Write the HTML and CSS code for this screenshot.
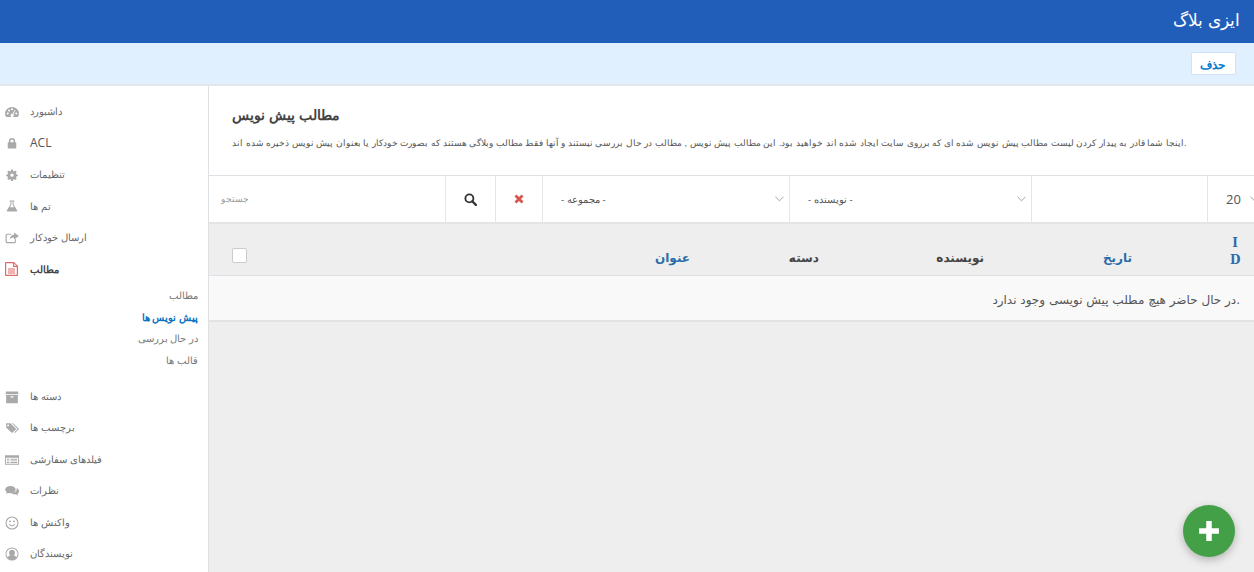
FILE: index.html
```html
<!DOCTYPE html>
<html lang="fa">
<head>
<meta charset="utf-8">
<title>ایزی بلاگ</title>
<link rel="stylesheet" href="styles.css">
</head>
<body>
<header class="topbar"><span class="brand" dir="rtl">ایزی بلاگ</span></header>
<div class="toolbar"><button class="btn-delete" type="button">حذف</button></div>
<div class="layout">
  <nav class="sidebar">
    <a class="nav-item"><svg class="ico" viewBox="0 0 18 14"><path d="M9 0.5C4 0.5 0 4.3 0 9c0 1.7.5 3.200 1.400 4.500h15.200C17.500 12.200 18 10.700 18 9 18 4.300 14 .5 9 .5z"/><g fill="#fff"><circle cx="3.500" cy="9" r="1.300"/><circle cx="5.200" cy="5" r="1.300"/><circle cx="9" cy="3.400" r="1.300"/><circle cx="14.500" cy="9" r="1.300"/><path d="M12.600 4.300l1 .6-2.900 5.100a2 2 0 1 1-1-.6z"/></g></svg><span>داشبورد</span></a>
    <a class="nav-item"><svg class="ico" viewBox="0 0 18 14"><path d="M5 6V4.500a4 4 0 0 1 8 0V6h.5a1 1 0 0 1 1 1v6a1 1 0 0 1-1 1h-9a1 1 0 0 1-1-1V7a1 1 0 0 1 1-1zm2 0h4V4.500a2 2 0 0 0-4 0z"/></svg><span class="latin">ACL</span></a>
    <a class="nav-item"><svg class="ico" viewBox="0 0 18 14"><path fill-rule="evenodd" d="M7.800 0h2.400l.3 1.900 1.300.5 1.600-1.100 1.700 1.700-1.100 1.600.5 1.300 1.900.3v2.400l-1.900.3-.5 1.300 1.100 1.600-1.700 1.700-1.600-1.100-1.300.5-.3 1.900H7.800l-.3-1.900-1.300-.5-1.600 1.100-1.700-1.700L4 10.200l-.5-1.300-1.900-.3V6.200l1.900-.3.500-1.300L2.900 3l1.700-1.700 1.600 1.100 1.300-.5zM9 5a2.200 2.200 0 1 0 0 4.400A2.200 2.200 0 0 0 9 5z"/></svg><span>تنظیمات</span></a>
    <a class="nav-item"><svg class="ico" viewBox="0 0 18 14"><path d="M6 0h6v1.200h-1V5l4.500 7.400c.5.800 0 1.600-.9 1.600H3.400c-.9 0-1.400-.8-.9-1.600L7 5V1.200H6zm2.200 1.200v4.100L6.300 8.500h5.400L9.800 5.300V1.200z"/></svg><span>تم ها</span></a>
    <a class="nav-item"><svg class="ico" viewBox="0 0 18 14"><path d="M11.500 0L18 4.500 11.500 9V6.300C8.500 6.300 6.800 7.200 6 9.500 6 5.500 8 3 11.500 2.700z"/><path d="M3 1.500h5v1.300H3.200c-.6 0-1 .4-1 1v7.400c0 .6.400 1 1 1h8.600c.6 0 1-.4 1-1V9l1.300-1v3.500c0 1.400-1 2.300-2.300 2.300H3c-1.400 0-2.300-1-2.300-2.300V3.800C.7 2.500 1.600 1.500 3 1.500z"/></svg><span>ارسال خودکار</span></a>
    <a class="nav-item nav-item-active"><svg class="ico ico-red" viewBox="0 0 14 14"><path d="M1 0h8l4 4v9a1 1 0 0 1-1 1H1a1 1 0 0 1-1-1V1a1 1 0 0 1 1-1z M1.200 1.200v11.600h10.600V5H8V1.200zM9.200 1.600V3.800h2.200zM3 6.500h7v1H3zM3 8.500h7v1H3zM3 10.500h7v1H3z" fill-rule="evenodd"/></svg><span>مطالب</span></a>
    <ul class="subnav">
      <li>مطالب</li>
      <li class="subnav-active">پیش نویس ها</li>
      <li>در حال بررسی</li>
      <li>قالب ها</li>
    </ul>
    <a class="nav-item"><svg class="ico" viewBox="0 0 18 14"><path fill-rule="evenodd" d="M1 0h16v3.500H1zM1.500 4.300h15V15h-15zM7 6v1.500h4V6z"/></svg><span>دسته ها</span></a>
    <a class="nav-item"><svg class="ico" viewBox="0 0 18 14"><path fill-rule="evenodd" d="M1.500 1H7l7.500 7.300L9 13.500 1.500 6.200zM4 2.500a1.200 1.200 0 1 0 0 2.400 1.200 1.200 0 0 0 0-2.400z"/><path d="M9 1h1.500L18 8.300l-5.200 5.200-1-1 4.300-4.200z"/></svg><span>برچسب ها</span></a>
    <a class="nav-item"><svg class="ico" viewBox="0 0 18 14"><path fill-rule="evenodd" d="M0 1h18v12H0zM1.200 4v7.800h15.600V4zM2.500 5.500h3v1.200h-3zM7 5.500h8.500v1.200H7zM2.500 7.500h3v1.200h-3zM7 7.500h8.500v1.200H7zM2.500 9.500h3v1.200h-3zM7 9.500h8.500v1.200H7z"/></svg><span>فیلدهای سفارشی</span></a>
    <a class="nav-item"><svg class="ico" viewBox="0 0 18 14"><ellipse cx="7" cy="5.200" rx="6.700" ry="4.700"/><path d="M2.500 8l-1.200 3 3.500-2z"/><path d="M14.500 3.300C16.700 4 18 5.500 18 7.300c0 1.400-.8 2.500-2 3.300l.8 2.400-3-1.700c-2.300.3-4.600-.4-5.800-1.800 3.800.2 7.200-2 7.200-5 0-.4-.1-.7-.7-1.400z"/></svg><span>نظرات</span></a>
    <a class="nav-item"><svg class="ico" viewBox="0 0 16 16"><path fill-rule="evenodd" d="M8 .5a7.500 7.500 0 1 1 0 15 7.500 7.500 0 0 1 0-15zm0 1.300a6.200 6.200 0 1 0 0 12.400A6.200 6.200 0 0 0 8 1.800zM5.700 5a1 1 0 1 1 0 2.200 1 1 0 0 1 0-2.200zm4.600 0a1 1 0 1 1 0 2.200 1 1 0 0 1 0-2.200zM4.400 9.400l1.100-.4c.5 1 1.400 1.500 2.500 1.500s2-.5 2.500-1.500l1.100.4c-.6 1.500-2 2.300-3.600 2.300s-3-.8-3.600-2.300z"/></svg><span>واکنش ها</span></a>
    <a class="nav-item"><svg class="ico" viewBox="0 0 16 16"><path fill-rule="evenodd" d="M8 .5a7.500 7.500 0 1 1 0 15 7.500 7.500 0 0 1 0-15zm0 1.200a6.300 6.300 0 0 0-4.900 10.200c.6-1.400 1.900-2.200 3-2.500a3.400 3.400 0 1 1 3.800 0c1.100.3 2.400 1.100 3 2.500A6.300 6.300 0 0 0 8 1.700z"/></svg><span>نویسندگان</span></a>
  </nav>
  <main class="main">
    <section class="intro">
      <h1 class="intro-title">مطالب پیش نویس</h1>
      <p class="intro-text">اینجا شما قادر به پیدار کردن لیست مطالب پیش نویس شده ای که برروی سایت ایجاد شده اند خواهید بود. این مطالب پیش نویس , مطالب در حال بررسی نیستند و آنها فقط مطالب وبلاگی هستند که بصورت خودکار یا بعنوان پیش نویس ذخیره شده اند.</p>
    </section>
    <div class="filters">
      <div class="f-cell f-search"><span class="placeholder">جستجو</span></div>
      <div class="f-cell f-btn"><svg class="search-ico" viewBox="0 0 14 14"><circle cx="5.800" cy="5.800" r="4.300" fill="none" stroke="#333" stroke-width="2"/><path d="M8.800 8.800l4 4" stroke="#333" stroke-width="2.400" stroke-linecap="round"/></svg></div>
      <div class="f-cell f-clear"><svg class="x-ico" viewBox="0 0 10 10"><path d="M1.500 1.500l7 7M8.500 1.500l-7 7" stroke="#d9534f" stroke-width="2.800"/></svg></div>
      <div class="f-cell f-select f-group"><svg class="chev" viewBox="0 0 10 6"><path d="M.5.5L5 5 9.500.5" fill="none" stroke="#999"/></svg><span>- مجموعه -</span></div>
      <div class="f-cell f-select f-author"><svg class="chev" viewBox="0 0 10 6"><path d="M.5.500L5 5 9.500.5" fill="none" stroke="#999"/></svg><span>- نویسنده -</span></div>
      <div class="f-cell f-empty"></div>
      <div class="f-cell f-limit"><span class="latin-num">20</span><svg class="chev" viewBox="0 0 10 6"><path d="M.5.500L5 5 9.500.5" fill="none" stroke="#999"/></svg></div>
    </div>
    <div class="thead">
      <span class="check"></span>
      <span class="th th-link">عنوان</span>
      <span class="th">دسته</span>
      <span class="th">نویسنده</span>
      <span class="th th-link">تاریخ</span>
      <span class="th th-link th-id"><span class="id-text">ID</span></span>
    </div>
    <div class="empty-row">در حال حاضر هیچ مطلب پیش نویسی وجود ندارد.</div>
  </main>
</div>
<button class="fab" type="button"><svg viewBox="0 0 20 20"><path d="M7.500 1h5v6.500H19v5h-6.500V19h-5v-6.500H1v-5h6.500z" fill="#fff"/></svg></button>
</body>
</html>
```
FILE: styles.css
```css
* { box-sizing: border-box; }
html, body { margin: 0; height: 100%; }
body {
  height: 572px;
  overflow: hidden;
  background: #eee;
  font-family: "Liberation Sans", sans-serif;
  color: #444;
  display: flex;
  flex-direction: column;
}
.topbar {
  height: 43px;
  flex: none;
  background: #215eba;
  display: flex;
  align-items: center;
  justify-content: flex-end;
  padding: 0 14px 3px 0;
}
.brand { color: #fff; font-size: 16.5px; }
.toolbar {
  height: 43px;
  flex: none;
  background: #e1f0ff;
  border-bottom: 2px solid #e4e7ea;
  display: flex;
  align-items: center;
  justify-content: flex-end;
  padding-right: 18px;
}
.btn-delete {
  width: 45px;
  height: 23px;
  padding: 2px 2px 0 0;
  background: #fff;
  border: 1px solid #cfe2f7;
  border-radius: 2px;
  color: #0b7ad1;
  font: bold 12px "Liberation Sans", sans-serif;
}
.layout { flex: 1; display: flex; min-height: 0; }
.sidebar {
  width: 209px;
  flex: none;
  background: #fff;
  border-right: 1px solid #dde0e4;
  padding: 10px 0 0 0;
}
.nav-item {
  display: flex;
  align-items: center;
  height: 31.5px;
  padding-left: 5px;
  font-size: 9.5px;
  color: #666;
  gap: 11px;
}
.nav-item span { line-height: 1; }
.nav-item .latin { font-size: 12px; font-family: "Open Sans", sans-serif; color: #555; }
.ico { width: 14px; height: 14px; flex: none; fill: #a9a9a9; overflow: visible; }
.ico-red { fill: #df6a67; }
.nav-item-active { font-weight: bold; color: #444; }
.subnav {
  list-style: none;
  margin: 0 0 9px;
  padding: 0 10px 0 0;
  text-align: right;
  font-size: 9.5px;
  color: #777;
}
.subnav li { height: 21.7px; line-height: 21.7px; }
.subnav-active { color: #0b6fc2; font-weight: bold; }
.main { flex: 1; min-width: 0; }
.intro {
  height: 89px;
  background: #fff;
  padding: 18px 23px 0;
}
.intro-title {
  margin: 0;
  font-size: 14px;
  line-height: 22px;
  font-weight: bold;
  color: #444;
}
.intro-text {
  margin: 9px 0 0;
  font-size: 9.2px;
  line-height: 16px;
  white-space: nowrap;
  color: #555;
}
.filters {
  height: 49px;
  background: #fff;
  border-top: 1px solid #dde0e4;
  border-bottom: 2px solid #e4e4e4;
  display: flex;
}
.f-cell { flex: none; display: flex; align-items: center; border-right: 1px solid #e4e6ea; font-size: 9.5px; color: #555; }
.f-search { width: 237px; padding-left: 12px; }
.placeholder { color: #999; font-size: 9px; }
.f-btn { width: 50px; justify-content: center; }
.f-clear { width: 47px; justify-content: center; }
.f-select { justify-content: space-between; flex-direction: row-reverse; padding: 0 5px 0 18px; }
.f-group { width: 247px; }
.f-author { width: 242px; }
.f-empty { width: 176px; }
.f-limit { width: 46px; border-right: 0; padding-left: 18px; gap: 9px; overflow: hidden; }
.latin-num { font-size: 13px; font-family: "Open Sans", sans-serif; color: #555; }
.chev { width: 9px; height: 6px; flex: none; }
.search-ico { width: 13px; height: 13px; }
.x-ico { width: 10px; height: 10px; }
.thead {
  height: 52px;
  border-bottom: 1px solid #dde0e4;
  display: grid;
  grid-template-columns: 14px 444px 129px 165px 148px 108px;
  padding-left: 23px;
  align-items: end;
  padding-bottom: 9px;
}
.check {
  width: 15px;
  height: 15px;
  background: #fff;
  border: 1px solid #ccc;
  border-radius: 2px;
  margin-bottom: 3px;
}
.th {
  text-align: right;
  font: bold 12px/16px "DejaVu Sans", sans-serif;
  color: #444;
}
.th-link { color: #2a6ca8; }
.th-id { font-family: "DejaVu Serif", serif; margin-bottom: -3px; }
.id-text { display: inline-block; width: 10px; word-break: break-all; line-height: 17px; text-align: center; }
.empty-row {
  height: 46px;
  padding: 3px 14px 0;
  background: #f9f9f9;
  border-bottom: 2px solid #e2e2e2;
  display: flex;
  align-items: center;
  justify-content: flex-end;
  font-size: 12px;
  font-family: "DejaVu Sans", sans-serif;
  color: #555;
}
.fab {
  position: absolute;
  left: 1183px;
  top: 505px;
  width: 52px;
  height: 52px;
  padding: 15px;
  border: 0;
  border-radius: 50%;
  background: #43a047;
  box-shadow: 0 3px 8px rgba(0,0,0,.25);
}
.fab svg { display: block; }
```
